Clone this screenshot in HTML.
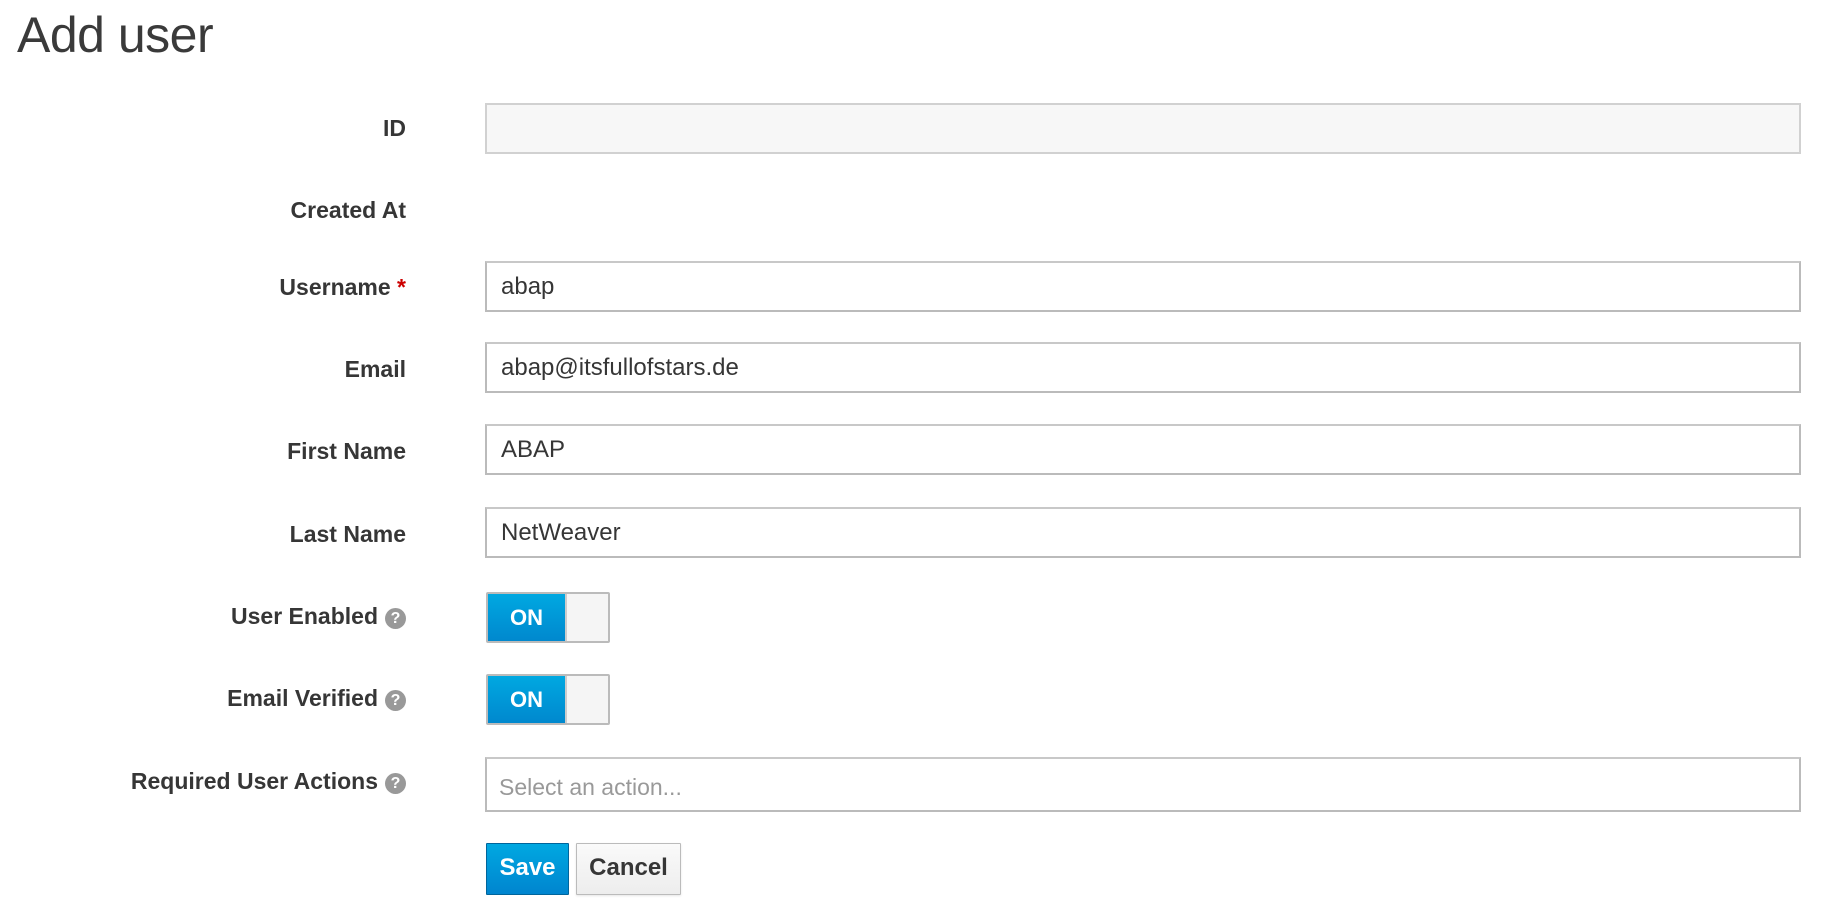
<!DOCTYPE html>
<html><head><meta charset="utf-8"><style>
body{margin:0;width:1834px;height:906px;background:#fff;font-family:"Liberation Sans",sans-serif;color:#363636;position:relative;overflow:hidden}
.t{position:absolute;left:17px;top:6px;font-size:50px;font-weight:300;color:#3a3a3a;letter-spacing:-0.5px}
.l{position:absolute;right:1428px;font-size:23px;font-weight:bold;color:#363636;white-space:nowrap;line-height:30px}
.l .q{display:inline-block;width:21px;height:21px;border-radius:50%;background:#999;color:#fff;font-size:16px;line-height:21px;text-align:center;margin-left:7px;vertical-align:1px}
.b{position:absolute;left:485px;width:1316px;border:2px solid #bbb;box-sizing:border-box;height:51px;font-size:24px;line-height:47px;padding-left:14px;color:#363636;border-top-color:#c8c8c8}
.tg{position:absolute;left:486px;width:124px;height:51px;border:2px solid #bbb;box-sizing:border-box;border-radius:2px;background:#f5f5f5;overflow:hidden}
.tg .on{position:absolute;left:0;top:0;width:77px;height:100%;background:linear-gradient(#00a8e1,#0088ce);color:#fff;font-weight:bold;font-size:22px;line-height:47px;text-align:center}
.tg .sep{position:absolute;left:77px;top:0;width:2px;height:100%;background:#ccc}
.btn{position:absolute;top:843px;height:52px;box-sizing:border-box;font-size:24px;font-weight:bold;line-height:48px;text-align:center;border-radius:1px}
</style></head><body>
<div class="t">Add user</div>

<div class="l" style="top:113px">ID</div>
<div class="b" style="top:103px;background:#f7f7f7;border-color:#d1d1d1"></div>

<div class="l" style="top:195px">Created At</div>

<div class="l" style="top:272px">Username <span style="color:#c00">*</span></div>
<div class="b" style="top:261px">abap</div>

<div class="l" style="top:354px">Email</div>
<div class="b" style="top:342px">abap@itsfullofstars.de</div>

<div class="l" style="top:436px">First Name</div>
<div class="b" style="top:424px">ABAP</div>

<div class="l" style="top:519px">Last Name</div>
<div class="b" style="top:507px">NetWeaver</div>

<div class="l" style="top:601px">User Enabled<span class="q">?</span></div>
<div class="tg" style="top:592px"><div class="on">ON</div><div class="sep"></div></div>

<div class="l" style="top:683px">Email Verified<span class="q">?</span></div>
<div class="tg" style="top:674px"><div class="on">ON</div><div class="sep"></div></div>

<div class="l" style="top:766px">Required User Actions<span class="q">?</span></div>
<div class="b" style="top:757px;height:55px;line-height:57px;padding-left:12px;color:#999;font-size:23px">Select an action...</div>

<div class="btn" style="left:486px;width:83px;background:linear-gradient(#00a8e1,#0085cf);border:1px solid #00659c;color:#fff">Save</div>
<div class="btn" style="left:576px;width:105px;background:linear-gradient(#fafafa,#ededed);border:1px solid #bbb;color:#363636;box-shadow:0 1px 2px rgba(0,0,0,.1)">Cancel</div>
</body></html>
